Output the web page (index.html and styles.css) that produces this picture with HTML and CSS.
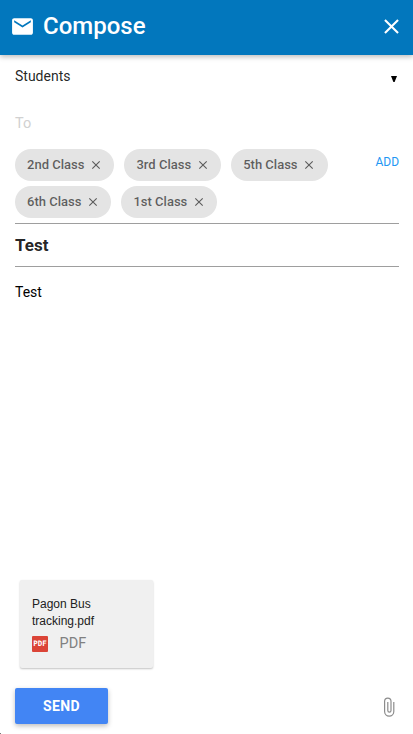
FILE: index.html
```html
<!DOCTYPE html>
<html lang="en">
<head>
<meta charset="utf-8">
<title>Compose</title>
<link rel="stylesheet" href="styles.css">
</head>
<body>
<header class="bar">
  <svg class="mail" viewBox="0 0 24 24"><path d="M20 4H4c-1.1 0-1.99.9-1.99 2L2 18c0 1.100.9 2 2 2h16c1.100 0 2-.9 2-2V6c0-1.100-.9-2-2-2zm0 4l-8 5-8-5V6l8 5 8-5v2z"/></svg>
  <h1 class="title">Compose</h1>
  <svg class="close" viewBox="0 0 24 24"><path d="M19 6.410L17.590 5 12 10.590 6.410 5 5 6.410 10.590 12 5 17.590 6.410 19 12 13.410 17.590 19 19 17.590 13.410 12z"/></svg>
</header>
<main class="form">
  <div class="group"><span>Students</span><svg class="caret" viewBox="0 0 6 6"><path d="M0 0h6L3.600 6H2.400z"/></svg></div>
  <div class="to">To</div>
  <div class="recipients">
    <div class="chips">
      <div class="chip">2nd Class<svg viewBox="0 0 16 16"><path d="M4.300 4.300l7.400 7.400M11.700 4.300l-7.400 7.400"/></svg></div>
      <div class="chip">3rd Class<svg viewBox="0 0 16 16"><path d="M4.300 4.300l7.400 7.400M11.700 4.300l-7.400 7.400"/></svg></div>
      <div class="chip">5th Class<svg viewBox="0 0 16 16"><path d="M4.300 4.300l7.400 7.400M11.700 4.300l-7.400 7.400"/></svg></div>
      <div class="chip">6th Class<svg viewBox="0 0 16 16"><path d="M4.300 4.300l7.400 7.400M11.700 4.300l-7.400 7.400"/></svg></div>
      <div class="chip">1st Class<svg viewBox="0 0 16 16"><path d="M4.300 4.300l7.400 7.400M11.700 4.300l-7.400 7.400"/></svg></div>
    </div>
    <a class="add">ADD</a>
  </div>
  <div class="subject">Test</div>
  <div class="message">Test</div>
  <div class="file">
    <div class="file-name">Pagon Bus tracking.pdf</div>
    <div class="file-type"><span class="pdf"><span>PDF</span></span>PDF</div>
  </div>
  <footer class="actions">
    <button class="send">SEND</button>
    <svg class="clip" viewBox="0 0 12 20"><path d="M10.800 5v9.600a4.600 4.600 0 0 1-9.200 0V4.300a3.200 3.200 0 0 1 6.400 0v9.200a1.600 1.600 0 0 1-3.200 0V5"/></svg>
  </footer>
</main>
<div class="corner"></div>
</body>
</html>
```
FILE: styles.css
```css
* { box-sizing: border-box; }
body {
  margin: 0;
  height: 734px;
  display: flex;
  flex-direction: column;
  overflow: hidden;
  background: #fff;
  color: rgba(0, 0, 0, .87);
  font: 14.5px/22px Roboto, sans-serif;
}
.bar {
  height: 55px;
  flex: none;
  display: flex;
  align-items: center;
  padding: 0 9px 2px 10px;
  background: #0277bd;
  box-shadow: 0 2px 5px rgba(0, 0, 0, .26);
}
.mail { width: 25px; height: 25px; fill: #fff; }
.title { flex: 1; margin: 0 0 2px 8px; color: #fff; font-size: 24px; font-weight: 500; line-height: 36px; }
.close { width: 25px; height: 25px; fill: #fff; }
.form { flex: 1; display: flex; flex-direction: column; padding: 0 14px 0 15px; }
.group { display: flex; justify-content: space-between; height: 22px; margin-top: 10px; font-size: 14px; }
.caret { width: 6px; height: 6px; margin: 11px 2px 0 0; fill: #000; }
.to { margin-top: 26px; color: #d1d1d1; }
.recipients { display: flex; justify-content: space-between; margin-top: 14px; height: 75px; border-bottom: 1px solid #9e9e9e; }
.chips { width: 330px; display: flex; flex-wrap: wrap; align-content: flex-start; gap: 5px 10px; }
.chip {
  display: flex;
  align-items: center;
  height: 32px;
  padding: 0 10.300px 0 12px;
  border-radius: 16px;
  background: #e4e4e4;
  color: rgba(0, 0, 0, .6);
  font-size: 13px;
  font-weight: 500;
  line-height: 32px;
}
.chip svg { width: 16px; height: 16px; margin-left: 3.800px; fill: none; stroke: currentColor; stroke-width: 1.100; }
.add { margin-top: 2px; color: #2196f3; font-size: 12px; }
.subject { height: 43px; border-bottom: 1px solid #9e9e9e; font-size: 17px; font-weight: 700; line-height: 43px; }
.message { flex: 1; padding-top: 14px; color: #000; font-size: 14px; }
.file {
  width: 132.500px;
  height: 88px;
  margin-left: 5px;
  padding: 16px 12px;
  border-radius: 2px;
  background: #f0f0f0;
  box-shadow: 0 1px 2px rgba(0, 0, 0, .24);
}
.file-name { width: 80px; color: #212121; font: 12px/17px "Liberation Sans", sans-serif; }
.file-type { display: flex; align-items: center; gap: 11.500px; margin-top: 3px; color: #808080; font-size: 14.5px; }
.pdf { display: flex; justify-content: center; align-items: center; width: 16px; height: 16px; border-radius: 1px; background: #db4437; }
.pdf span { color: #fff; font: 700 7.5px/8px "DejaVu Sans Mono", monospace; }
.actions { display: flex; justify-content: space-between; height: 66px; padding-top: 20px; }
.send {
  width: 93px;
  height: 36px;
  padding: 0;
  border: 0;
  border-radius: 2px;
  background: #4285f4;
  box-shadow: 0 2px 5px rgba(0, 0, 0, .26);
  color: #fff;
  font: 700 14px/36px Roboto, sans-serif;
  letter-spacing: .4px;
}
.clip { width: 12px; height: 20px; margin: 9px 4px 0 0; fill: none; stroke: #8c8c8c; stroke-width: 1.200; }
.corner { position: absolute; left: 0; bottom: 0; width: 1px; height: 1px; background: #777; }
```
